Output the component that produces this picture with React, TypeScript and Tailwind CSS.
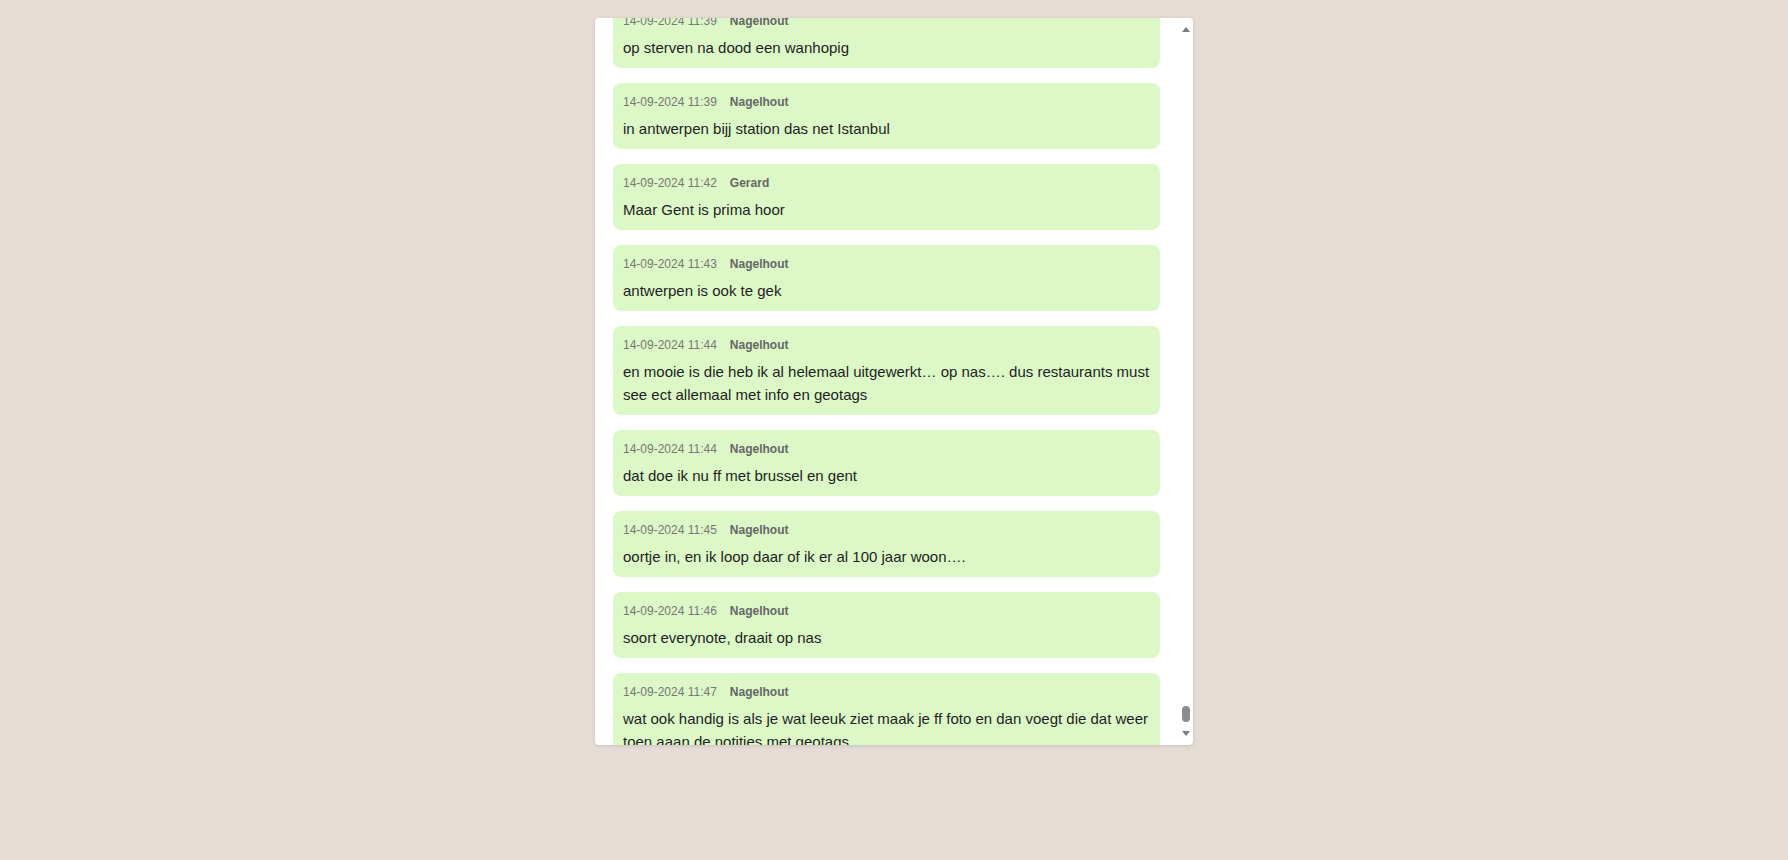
import React, { useLayoutEffect, useRef } from 'react';

interface Message {
  id: number;
  date: string;
  author: string;
  text: string;
}

const messages: Message[] = [
  { id: 1, date: '14-09-2024 11:39', author: 'Nagelhout', text: 'op sterven na dood een wanhopig' },
  { id: 2, date: '14-09-2024 11:39', author: 'Nagelhout', text: 'in antwerpen bijj station das net Istanbul' },
  { id: 3, date: '14-09-2024 11:42', author: 'Gerard', text: 'Maar Gent is prima hoor' },
  { id: 4, date: '14-09-2024 11:43', author: 'Nagelhout', text: 'antwerpen is ook te gek' },
  {
    id: 5,
    date: '14-09-2024 11:44',
    author: 'Nagelhout',
    text: 'en mooie is die heb ik al helemaal uitgewerkt… op nas…. dus restaurants must see ect allemaal met info en geotags',
  },
  { id: 6, date: '14-09-2024 11:44', author: 'Nagelhout', text: 'dat doe ik nu ff met brussel en gent' },
  { id: 7, date: '14-09-2024 11:45', author: 'Nagelhout', text: 'oortje in, en ik loop daar of ik er al 100 jaar woon….' },
  { id: 8, date: '14-09-2024 11:46', author: 'Nagelhout', text: 'soort everynote, draait op nas' },
  {
    id: 9,
    date: '14-09-2024 11:47',
    author: 'Nagelhout',
    text: 'wat ook handig is als je wat leeuk ziet maak je ff foto en dan voegt die dat weer toen aaan de notities met geotags',
  },
];

const ChatBubble: React.FC<{ message: Message }> = ({ message }) => (
  <div className="bg-[#dcf8c6] rounded-[8px] px-[10px] pt-[11px] pb-[9px]">
    <div className="flex items-center text-[12px] leading-[16px]">
      <span className="text-[#777777]">{message.date}</span>
      <span className="ml-[13px] font-bold text-[#666666]">{message.author}</span>
    </div>
    <p className="mt-[7px] text-[15px] leading-[23px] text-[#1e1e1e]">{message.text}</p>
  </div>
);

export default function App() {
  const listRef = useRef<HTMLDivElement>(null);

  useLayoutEffect(() => {
    if (listRef.current) listRef.current.scrollTop = 34;
  }, []);

  return (
    <div className="min-h-screen w-full bg-[#e5ddd5] pt-[18px] font-['Liberation_Sans',Arial,sans-serif]">
      <div className="mx-auto flex h-[727px] w-[598px] overflow-hidden rounded-[4px] bg-white shadow-[0_1px_4px_rgba(0,0,0,0.12)]">
        {/* Messages */}
        <div ref={listRef} className="flex-1 overflow-hidden">
          <div className="flex flex-col gap-[15px] px-[18px] py-[18px]">
            {messages.map((m) => (
              <ChatBubble key={m.id} message={m} />
            ))}
          </div>
        </div>

        {/* Scrollbar */}
        <div className="flex w-[15px] flex-col items-center py-[9px]">
          <svg width="8" height="5" viewBox="0 0 8 5">
            <path d="M4 0L8 5H0z" fill="#7a7a7a" />
          </svg>
          <div className="flex-1" />
          <div className="h-[16px] w-[8px] rounded-full bg-[#8c8c8c]" />
          <svg width="8" height="5" viewBox="0 0 8 5" className="mt-[9px]">
            <path d="M0 0H8L4 5z" fill="#7a7a7a" />
          </svg>
        </div>
      </div>
    </div>
  );
}
